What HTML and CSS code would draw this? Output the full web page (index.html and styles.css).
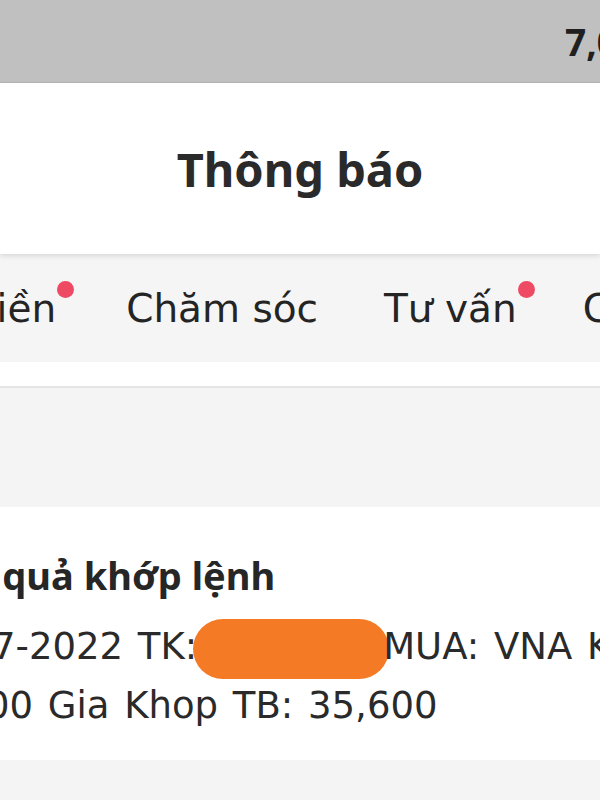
FILE: index.html
```html
<!DOCTYPE html>
<html lang="vi">
<head>
    <meta charset="UTF-8">
    <meta name="viewport" content="width=device-width, initial-scale=1.0">
    <title>Thông báo</title>
    <link rel="stylesheet" href="styles.css">
</head>
<body>
    <div class="status-bar">
        <span class="balance">7,000</span>
    </div>

    <header class="header">
        <h1>Thông báo</h1>
    </header>

    <nav class="tabs">
        <div class="tab dot">Tiền</div>
        <div class="tab">Chăm sóc</div>
        <div class="tab dot">Tư vấn</div>
        <div class="tab">Cổ phiếu</div>
    </nav>
    <div class="tabs-gap"></div>

    <div class="empty-block"></div>

    <!-- Notification card -->
    <div class="card">
        <div class="card-title">Kết quả khớp lệnh</div>
        <p class="card-body">
            <span class="line line-1">7-2022 TK:<span class="redact"></span>MUA: VNA KL: 100</span>
            <span class="line line-2">00 Gia Khop TB: 35,600</span>
        </p>
    </div>

    <div class="empty-block bottom"></div>
</body>
</html>
```

FILE: styles.css
```css
body {
    margin: 0;
    font-family: 'DejaVu Sans', sans-serif;
    background-color: #f4f4f4;
    color: #262626;
    overflow: hidden;
}
.status-bar {
    height: 82px;
    background-color: #c0c0c0;
    border-bottom: 1px solid #b6b6b6;
    padding-left: 565px;
    white-space: nowrap;
    overflow: hidden;
    display: flex;
    align-items: center;
}
.balance {
    font-family: 'Noto Sans', sans-serif;
    font-size: 37px;
    font-weight: 700;
    color: #202020;
}
.header {
    height: 171px;
    background: white;
    display: flex;
    align-items: center;
    justify-content: center;
    box-shadow: 0px 2px 5px rgba(0, 0, 0, 0.12);
    position: relative;
}
.header h1 {
    margin: 0;
    font-family: 'Noto Sans', sans-serif;
    font-size: 47px;
    font-weight: 700;
    color: #2a2a2a;
}
.tabs {
    height: 108px;
    background-color: #f5f5f5;
    display: flex;
    align-items: center;
    gap: 66px;
    margin-left: -26px;
    white-space: nowrap;
    font-size: 39px;
    color: #242424;
}
.tab {
    position: relative;
}
.tab:first-child {
    margin-right: 4px;
}
.tab.dot::after {
    content: '';
    position: absolute;
    top: -5px;
    right: -18px;
    width: 17px;
    height: 17px;
    border-radius: 50%;
    background-color: #ef4a64;
}
.tabs-gap {
    height: 24px;
    background: white;
    border-bottom: 2px solid #e4e4e4;
}
.empty-block {
    height: 119px;
}
.empty-block.bottom {
    height: 40px;
}
.card {
    height: 253px;
    background: white;
    overflow: hidden;
    white-space: nowrap;
    padding-top: 42px;
    box-sizing: border-box;
}
.card-title {
    font-family: 'Noto Sans', sans-serif;
    font-size: 38px;
    font-weight: 700;
    margin-left: -72px;
    color: #262626;
}
.card-body {
    margin: 18px 0 0;
    font-size: 37px;
    line-height: 53px;
    word-spacing: 3px;
    color: #2a2a2a;
}
.line {
    display: block;
}
.line-1 {
    margin-left: -8px;
}
.line-2 {
    margin-left: -14px;
}
.redact {
    display: inline-block;
    width: 196px;
    height: 60px;
    margin: 0 -6px 0 -4px;
    border-radius: 30px;
    background-color: #f47a26;
    vertical-align: -20px;
}
```
